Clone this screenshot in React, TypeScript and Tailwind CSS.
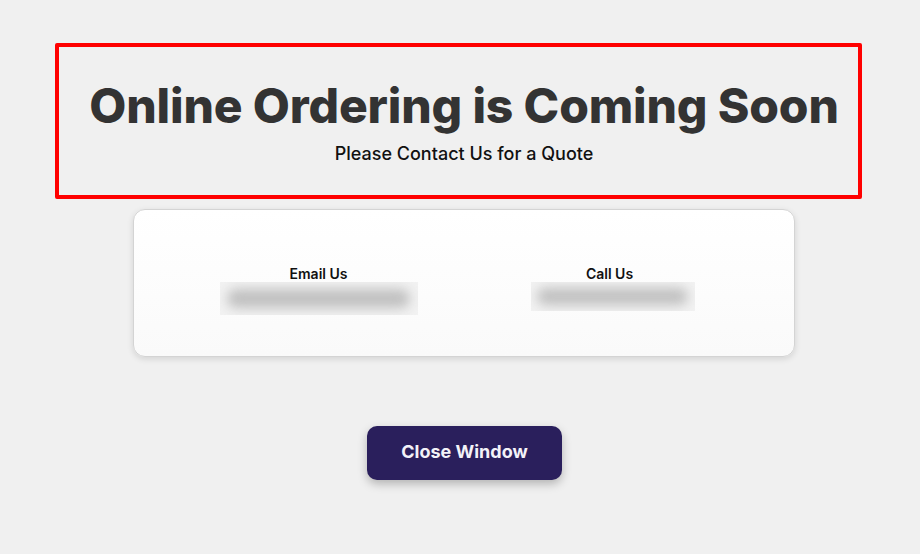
import React from 'react';

const Blurred = ({ w, h, className = '' }: { w: string; h: string; className?: string }) => (
  <div className={`${w} ${h} ${className} bg-[#f2f2f2] overflow-hidden flex items-center justify-center`}>
    <div className="w-[92%] h-[60%] rounded-full bg-[#c0c0c0] blur-[6px]" />
  </div>
);

export default function App() {
  return (
    <div className="min-h-[554px] w-full bg-[#f0f0f0] font-['Inter',sans-serif] pt-[43px]">
      <div className="ml-[55px] w-[807px] h-[156px] border-4 border-[#ff0000] rounded-[2px] flex flex-col items-center pl-[11px] pt-[30px]">
        <h1 className="text-[48px] leading-[58px] font-extrabold text-[#333333] tracking-[-0.15px]">
          Online Ordering is Coming Soon
        </h1>
        <p className="mt-[7px] text-[18px] leading-[24px] font-medium text-[#111111]">
          Please Contact Us for a Quote
        </p>
      </div>

      <div className="ml-[133px] mt-[10px] w-[662px] h-[148px] rounded-[12px] border border-[#d4d4d4] bg-gradient-to-b from-white to-[#fafafa] shadow-[0_2px_6px_rgba(0,0,0,0.12)] grid grid-cols-2 px-[39px] pt-[55px]">
        <div className="flex flex-col items-center">
          <span className="text-[14px] leading-[17px] font-semibold text-[#111111]">Email Us</span>
          <Blurred w="w-[198px]" h="h-[33px]" />
        </div>
        <div className="flex flex-col items-center">
          <span className="text-[14px] leading-[17px] font-semibold text-[#111111]">Call Us</span>
          <Blurred w="w-[164px]" h="h-[29px]" className="ml-[6px]" />
        </div>
      </div>

      <div className="flex justify-center pl-[9px] mt-[69px]">
        <button className="w-[195px] h-[54px] pb-[3px] rounded-[10px] bg-[#2a1f5c] text-[#f3f2f8] text-[18px] font-bold shadow-[0_4px_10px_rgba(0,0,0,0.25)]">
          Close Window
        </button>
      </div>
    </div>
  );
}
